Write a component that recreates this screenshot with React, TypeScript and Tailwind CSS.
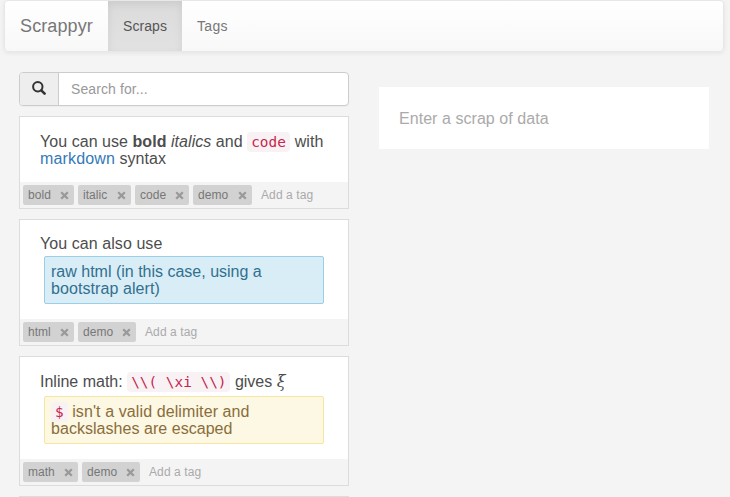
import type { ReactNode } from "react";

function Code({ children, className = "" }: { children: ReactNode; className?: string }) {
  return (
    <code
      className={`-my-1 inline-block h-5 rounded bg-[#f9f2f4] px-1 font-['DejaVu_Sans_Mono',monospace] text-[14.4px] leading-5 tracking-normal whitespace-pre text-[#c7254e] ${className}`}
    >
      {children}
    </code>
  );
}

function Cross() {
  return (
    <svg viewBox="0 0 9 9" className="size-[9px] shrink-0" aria-hidden="true">
      <path d="M1.2 1.2 7.8 7.8M7.8 1.2 1.2 7.8" stroke="#999" strokeWidth="2.3" fill="none" />
    </svg>
  );
}

function Tag({ label, width }: { label: string; width: string }) {
  return (
    <span
      className={`flex h-5 shrink-0 items-center justify-between rounded-[2px] bg-[#d2d2d2] px-[5px] text-[12px] leading-5 tracking-[0.04px] text-[#777] ${width}`}
    >
      {label}
      <Cross />
    </span>
  );
}

function Scrap({ children, height, tags }: { children: ReactNode; height: string; tags: [string, string][] }) {
  return (
    <article className={`flex w-[330px] shrink-0 flex-col border border-[#dcdcdc] bg-white ${height}`}>
      <div className="flex-1 px-5 text-[16px] leading-[17px] text-[#4d4d4d]">{children}</div>
      <footer className="flex h-[26px] items-center gap-1 bg-[#f4f4f4] px-[3px]">
        {tags.map(([label, width]) => (
          <Tag key={label} label={label} width={width} />
        ))}
        <span className="ml-[5px] text-[12px] leading-5 tracking-[0.1px] text-[#aaa]">Add a tag</span>
      </footer>
    </article>
  );
}

export default function App() {
  return (
    <div className="h-[497px] w-[730px] overflow-hidden bg-[#f4f4f4] px-1 font-['Liberation_Sans',Arial,sans-serif]">
      <nav className="flex h-[52px] w-[720px] rounded border border-[#e7e7e7] bg-linear-to-b from-white to-[#f8f8f8] shadow-[0_1px_5px_rgba(0,0,0,0.075)]">
        <a className="w-[103px] pl-[15px] text-[18px] leading-[50px] tracking-[0.12px] text-[#777]">Scrappyr</a>
        <a className="w-[74px] bg-linear-to-b from-[#dbdbdb] to-[#e2e2e2] pl-[15px] text-[14px] leading-[50px] tracking-[0.08px] text-[#555] shadow-[inset_0_3px_9px_rgba(0,0,0,0.075)]">
          Scraps
        </a>
        <a className="pl-[15px] text-[14px] leading-[50px] tracking-[0.3px] text-[#777]">Tags</a>
      </nav>
      <div className="flex gap-[30px] pl-[15px]">
        <main className="flex flex-col gap-[10px] pt-5">
          <div className="flex h-[34px] w-[330px] rounded border border-[#ccc] bg-white shadow-[0_1px_1px_rgba(0,0,0,0.03)]">
            <div className="flex w-[39px] items-center justify-center rounded-l-[3px] border-r border-[#ccc] bg-[#eee]">
              <svg viewBox="0 0 14 14" className="mb-0.5 size-[14px]" fill="none" stroke="#333" aria-hidden="true">
                <circle cx="5.8" cy="5.7" r="4.7" strokeWidth="2" />
                <path d="m9.3 9.3 3.3 3.3" strokeWidth="2.6" strokeLinecap="round" />
              </svg>
            </div>
            <span className="pl-3 text-[14px] leading-8 tracking-[0.1px] text-[#999]">Search for...</span>
          </div>
          <Scrap
            height="h-[93px]"
            tags={[
              ["bold", "w-[51px]"],
              ["italic", "w-[53px]"],
              ["code", "w-[54px]"],
              ["demo", "w-[59px]"],
            ]}
          >
            <p className="pt-4 tracking-[0.05px] whitespace-nowrap">
              You can use <strong>bold</strong> <em>italics</em> and <Code className="w-[43px]">code</Code> with
              <br />
              <a className="tracking-[0.15px] text-[#337ab7]">markdown</a> syntax
            </p>
          </Scrap>
          <Scrap
            height="h-[127px]"
            tags={[
              ["html", "w-[51px]"],
              ["demo", "w-[58px]"],
            ]}
          >
            <p className="pt-[15px] tracking-[0.07px]">You can also use</p>
            <div className="mt-1 ml-1 h-12 w-[280px] rounded-[2px] border border-[#9acfea] bg-[#d9edf7] px-1.5 pt-1.5 whitespace-nowrap text-[#31708f]">
              raw html (in this case, using a<br />
              <span className="tracking-[0.08px]">bootstrap alert)</span>
            </div>
          </Scrap>
          <Scrap
            height="h-[130px]"
            tags={[
              ["math", "w-[55px]"],
              ["demo", "w-[58px]"],
            ]}
          >
            <p className="h-[33px] pt-4 whitespace-nowrap">
              Inline math: <Code>{"\\\\( \\xi \\\\)"}</Code> gives{" "}
              <i className="font-['DejaVu_Serif',serif] text-[16px] leading-none">ξ</i>
            </p>
            <div className="mt-[6px] ml-1 h-12 w-[280px] rounded-[2px] border border-[#f5e79e] bg-[#fcf8e3] px-1.5 pt-1.5 tracking-[0.1px] whitespace-nowrap text-[#8a6d3b]">
              <Code>$</Code> isn't a valid delimiter and
              <br />
              <span className="tracking-[0.04px]">backslashes are escaped</span>
            </div>
          </Scrap>
          <div className="h-px w-[330px] bg-[#dcdcdc]" />
        </main>
        <section className="mt-[35px] h-[62px] w-[330px] bg-white px-5 text-[16px] leading-[63px] tracking-[0.05px] text-[#aaa]">
          Enter a scrap of data
        </section>
      </div>
    </div>
  );
}
